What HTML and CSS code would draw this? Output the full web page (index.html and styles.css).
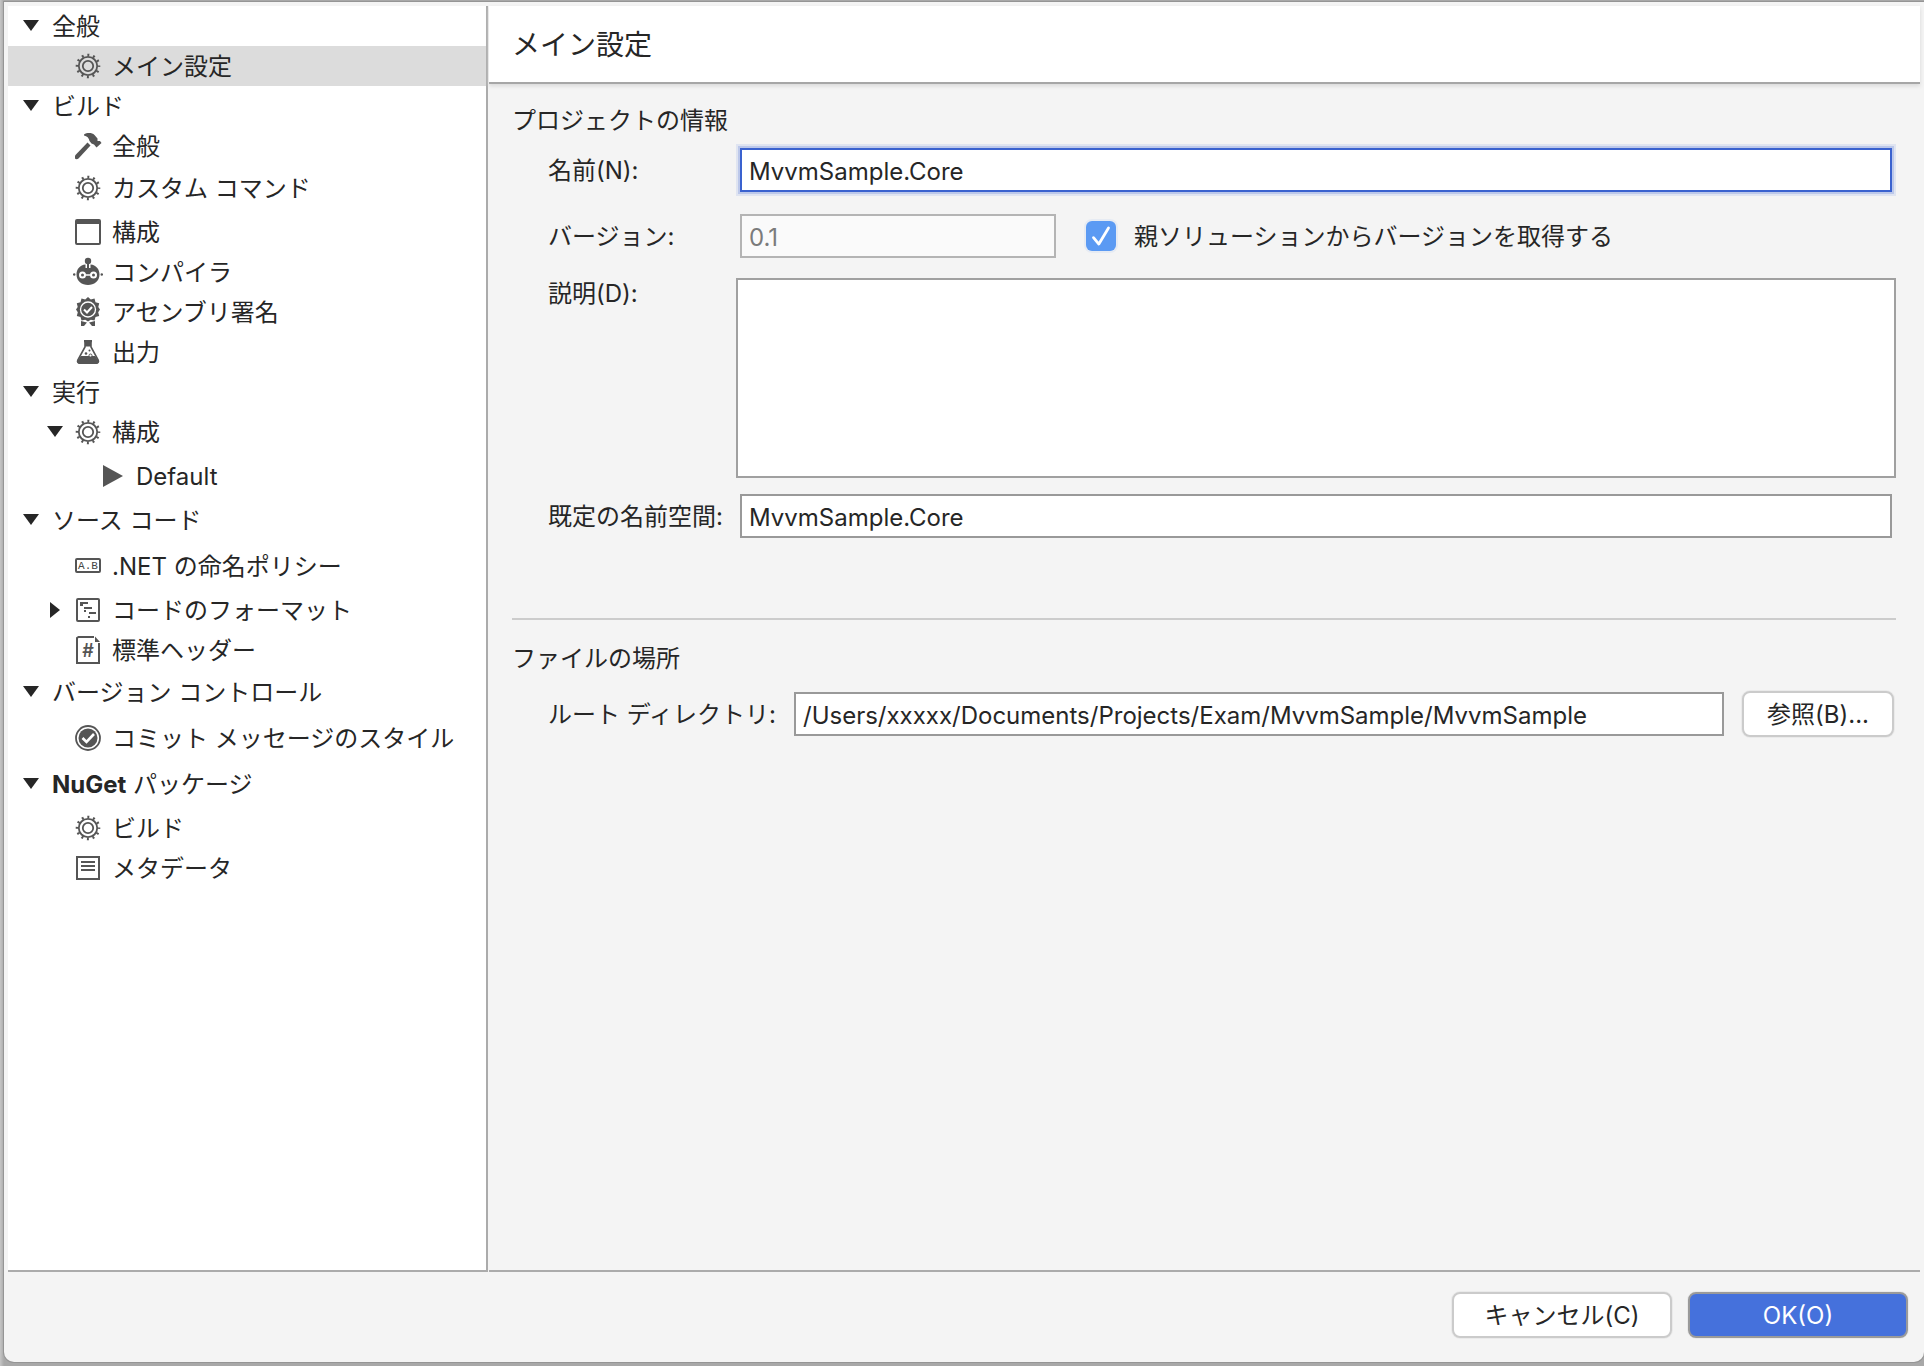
FILE: index.html
```html
<!DOCTYPE html>
<html lang="ja">
<head>
<meta charset="utf-8">
<title>メイン設定</title>
<link rel="stylesheet" href="styles.css">
</head>
<body>
<svg class="defs" width="0" height="0" aria-hidden="true">
  <defs>
    <symbol id="down" viewBox="0 0 16 12"><path d="M0 0h16L8 11z" fill="#262626"/></symbol>
    <symbol id="right" viewBox="0 0 12 16"><path d="M1 0v16l10-8z" fill="#262626"/></symbol>
    <symbol id="gear" viewBox="0 0 30 30">
      <circle cx="15" cy="15" r="11" fill="none" stroke="#555" stroke-width="2.6" stroke-dasharray="2 3.76" stroke-dashoffset="1"/>
      <circle cx="15" cy="15" r="9.2" fill="none" stroke="#555" stroke-width="1.8"/>
      <circle cx="15" cy="15" r="5.2" fill="none" stroke="#555" stroke-width="1.8"/>
    </symbol>
    <symbol id="hammer" viewBox="0 0 30 30">
      <path d="M11 3.500C14 1.500 19 1.500 21.500 4L24.500 7.500V10h2.500L28.500 12L23.500 16.500L21 13.500L18.500 12.500L16.500 10C16 7 14 5 11 4.500z" fill="#555"/>
      <path d="M14.500 11.500L17.500 14.500L5.500 27.500C4.500 28.500 2.500 28.500 2 27.500V24.500z" fill="#555"/>
    </symbol>
    <symbol id="window" viewBox="0 0 30 30"><path fill-rule="evenodd" d="M4 2h22a2 2 0 0 1 2 2v22a2 2 0 0 1-2 2H4a2 2 0 0 1-2-2V4a2 2 0 0 1 2-2zM4 7v19h22V7z" fill="#555"/></symbol>
    <symbol id="robot" viewBox="0 0 30 30">
      <circle cx="15" cy="4" r="3.200" fill="#555"/><path d="M15 5v6" stroke="#555" stroke-width="2"/>
      <path d="M12.500 7.500C7 8 3.500 12 3.500 17.500C3.500 24 9 28 15 28S26.500 24 26.500 17.500C26.500 12 23 8 17.500 7.500V11H16V8H14V11H12.500z" fill="#555"/>
      <circle cx="9.500" cy="18" r="2.500" fill="#555" stroke="#fff" stroke-width="2"/><circle cx="20.500" cy="18" r="2.500" fill="#555" stroke="#fff" stroke-width="2"/>
      <path d="M12.500 18h5" stroke="#fff" stroke-width="1.500"/><circle cx="1.200" cy="17.500" r="1.300" fill="#555"/><circle cx="28.800" cy="17.500" r="1.300" fill="#555"/>
    </symbol>
    <symbol id="badge" viewBox="0 0 30 30">
      <path d="M15 0l2.800 2.500L21.500 1.600l1 3.600 3.700 1.100-.9 3.700L27 12.500l-1.800 2.700 1 3.800-3.700 1-1 3.500-3.700-.8L15 24.500l-2.800-1.800-3.700.8-1-3.500-3.700-1 1-3.800L3 12.500 4.700 10l-.9-3.700 3.700-1.100 1-3.600 3.700.9z" fill="#555"/>
      <circle cx="15" cy="12.500" r="7.500" fill="none" stroke="#fff" stroke-width="1.300"/>
      <path d="M11 12.500l3 3 5-5.500" fill="none" stroke="#fff" stroke-width="2"/>
      <path d="M8 24l6 1.500-3 3.500H8zM22 24l-6 1.500 3 3.500h3z" fill="#555"/>
    </symbol>
    <symbol id="flask" viewBox="0 0 30 30">
      <path d="M12 4v6L4.800 23c-.8 2 .2 3.200 2 3.200h16.400c1.800 0 2.800-1.200 2-3.200L18 10V4" fill="#fff" stroke="#555" stroke-width="1.600"/>
      <path d="M11 3h8v2l-1 .5V9.500h-6V5.500L11 5zM7.800 19h14.400l3 4.500c.6 2-.5 3.300-2 3.300H6.800c-1.500 0-2.600-1.300-2-3.300z" fill="#555"/>
      <circle cx="16.500" cy="13.500" r="1" fill="#555"/><circle cx="13" cy="16.500" r="1.300" fill="#555"/><circle cx="17.500" cy="18.500" r="1.500" fill="#fff" stroke="#555"/>
    </symbol>
    <symbol id="play" viewBox="0 0 30 30"><path d="M6 4v22l20-11z" fill="#555"/></symbol>
    <symbol id="naming" viewBox="0 0 30 30">
      <rect x="3" y="8" width="24" height="13" rx="1" fill="none" stroke="#555" stroke-width="2"/>
      <text x="15" y="18" text-anchor="middle" font-family="Liberation Mono, monospace" font-size="11" fill="#444">A.B</text>
    </symbol>
    <symbol id="format" viewBox="0 0 30 30">
      <rect x="4" y="4" width="22" height="22" rx="1" fill="none" stroke="#555" stroke-width="2"/>
      <path d="M7 8h8M11 13h8M16 18h7M15 22h2M7 10h3M11 16h2" fill="none" stroke="#555" stroke-width="2"/>
    </symbol>
    <symbol id="header" viewBox="0 0 30 30">
      <path d="M21 2H5.500L4 3v25h22V8" fill="none" stroke="#555" stroke-width="2"/><path d="M22 1.500V7h5z" fill="#555"/>
      <text x="15" y="22" text-anchor="middle" font-family="Inter, sans-serif" font-size="18" font-weight="600" fill="#555">#</text>
    </symbol>
    <symbol id="commit" viewBox="0 0 30 30">
      <circle cx="15" cy="15" r="12" fill="none" stroke="#555" stroke-width="1.800"/><circle cx="15" cy="15" r="9.500" fill="#555"/>
      <path d="M9.500 15l4 4 7.500-8" fill="none" stroke="#fff" stroke-width="2.600"/>
    </symbol>
    <symbol id="metadata" viewBox="0 0 30 30"><path d="M4 4h22v22H4zM8 9h14M8 13h14M8 17h14" fill="none" stroke="#555" stroke-width="2"/></symbol>
  </defs>
</svg>

<form class="dialog">
  <nav class="sidebar" aria-label="設定">
    <ul class="tree">
      <li><div class="row"><svg class="arrow"><use href="#down"/></svg>全般</div>
        <ul>
          <li><div class="row child selected"><svg class="icon"><use href="#gear"/></svg>メイン設定</div></li>
        </ul></li>
      <li><div class="row"><svg class="arrow"><use href="#down"/></svg>ビルド</div>
        <ul>
          <li><div class="row child"><svg class="icon"><use href="#hammer"/></svg>全般</div></li>
          <li><div class="row child space-s"><svg class="icon"><use href="#gear"/></svg>カスタム コマンド</div></li>
          <li><div class="row child space-m"><svg class="icon"><use href="#window"/></svg>構成</div></li>
          <li><div class="row child"><svg class="icon"><use href="#robot"/></svg>コンパイラ</div></li>
          <li><div class="row child"><svg class="icon"><use href="#badge"/></svg>アセンブリ署名</div></li>
          <li><div class="row child"><svg class="icon"><use href="#flask"/></svg>出力</div></li>
        </ul></li>
      <li><div class="row"><svg class="arrow"><use href="#down"/></svg>実行</div>
        <ul>
          <li><div class="row branch"><svg class="arrow"><use href="#down"/></svg><svg class="icon"><use href="#gear"/></svg>構成</div>
            <ul>
              <li><div class="row leaf space-m"><svg class="icon"><use href="#play"/></svg>Default</div></li>
            </ul></li>
        </ul></li>
      <li><div class="row space-m"><svg class="arrow"><use href="#down"/></svg>ソース コード</div>
        <ul>
          <li><div class="row child space-l"><svg class="icon"><use href="#naming"/></svg>.NET の命名ポリシー</div></li>
          <li><div class="row branch space-m"><svg class="arrow"><use href="#right"/></svg><svg class="icon"><use href="#format"/></svg>コードのフォーマット</div></li>
          <li><div class="row child"><svg class="icon"><use href="#header"/></svg>標準ヘッダー</div></li>
        </ul></li>
      <li><div class="row space-s"><svg class="arrow"><use href="#down"/></svg>バージョン コントロール</div>
        <ul>
          <li><div class="row child space-l"><svg class="icon"><use href="#commit"/></svg>コミット メッセージのスタイル</div></li>
        </ul></li>
      <li><div class="row space-l"><svg class="arrow"><use href="#down"/></svg><span><b>NuGet</b> パッケージ</span></div>
        <ul>
          <li><div class="row child space-m"><svg class="icon"><use href="#gear"/></svg>ビルド</div></li>
          <li><div class="row child"><svg class="icon"><use href="#metadata"/></svg>メタデータ</div></li>
        </ul></li>
    </ul>
  </nav>

  <main class="main">
    <header class="header"><h1>メイン設定</h1></header>
    <div class="content">
      <section>
        <h2>プロジェクトの情報</h2>
        <div class="fields">
          <div class="field name">
            <label for="name">名前(N):</label>
            <input class="text focused" id="name" type="text" value="MvvmSample.Core">
          </div>
          <div class="field version">
            <label for="version">バージョン:</label>
            <input class="text short" id="version" type="text" value="0.1" disabled>
            <span class="check">
              <input id="inherit" type="checkbox" checked>
              <svg viewBox="0 0 28 28" aria-hidden="true"><path d="M7 15.500l5 6L21 6.500" fill="none" stroke="#fff" stroke-width="2.600" stroke-linecap="round" stroke-linejoin="round"/></svg>
            </span>
            <label for="inherit">親ソリューションからバージョンを取得する</label>
          </div>
          <div class="field description">
            <label for="description">説明(D):</label>
            <textarea id="description"></textarea>
          </div>
          <div class="field">
            <label for="namespace">既定の名前空間:</label>
            <input class="text" id="namespace" type="text" value="MvvmSample.Core">
          </div>
        </div>
      </section>
      <hr>
      <section>
        <h2>ファイルの場所</h2>
        <div class="fields">
          <div class="field root">
            <label for="root">ルート ディレクトリ:</label>
            <input class="text" id="root" type="text" value="/Users/xxxxx/Documents/Projects/Exam/MvvmSample/MvvmSample">
            <button class="button" type="button">参照(B)...</button>
          </div>
        </div>
      </section>
    </div>
  </main>

  <footer class="footer">
    <button class="button action" type="button">キャンセル(C)</button>
    <button class="button action primary" type="submit">OK(O)</button>
  </footer>
</form>
</body>
</html>
```
FILE: styles.css
```css
* {
  box-sizing: border-box;
}

body {
  margin: 0;
  min-height: 100vh;
  display: flex;
  padding: 2px 0 4px 4px;
  background: linear-gradient(to right, #c6c6c6, #a8a8a8 4px, #a8a8a8);
  color: #262626;
  font: 24px/32px Inter, "Noto Sans CJK JP", sans-serif;
}

.defs {
  position: absolute;
}

ul {
  list-style: none;
  margin: 0;
  padding: 0;
}

.dialog {
  flex: 1;
  display: grid;
  grid-template: 1fr 90px / 480px 1fr;
  column-gap: 1px;
  padding: 4px 4px 0;
  background: #f4f4f4;
  border-radius: 0 0 10px 10px;
  box-shadow: 0 0 0 1px #959595;
}

/* Category tree */
.sidebar {
  background: #fff;
  border-right: 2px solid #ababab;
  border-bottom: 2px solid #ababab;
}

.row {
  display: flex;
  align-items: center;
  height: 40px;
  padding: 2px 0 0 15px;
  white-space: nowrap;
}

.row.child {
  padding-left: 65px;
}

.row.branch {
  padding-left: 39px;
}

.row.leaf {
  padding-left: 89px;
}

.space-s {
  margin-top: 2px;
}

.space-m {
  margin-top: 4px;
}

.space-l {
  margin-top: 6px;
}

.selected {
  background: #dcdcdc;
}

.arrow {
  width: 16px;
  height: 16px;
  margin: 0 13px 2px 0;
}

.branch .arrow {
  margin-right: 10px;
}

.icon {
  width: 30px;
  height: 30px;
  margin: 0 9px 2px 0;
}

/* Settings page */
.main {
  display: flex;
  flex-direction: column;
  border-bottom: 2px solid #ababab;
}

.header {
  padding: 19px 23px 17px;
  background: #fff;
  border-bottom: 2px solid #a6a6a6;
  box-shadow: 0 2px 4px #d8d8d8;
}

h1,
h2 {
  margin: 0;
  font-weight: 400;
}

h1 {
  font-size: 28px;
  line-height: 40px;
}

h2 {
  font-size: 24px;
  line-height: 32px;
}

.content {
  padding: 21px 24px 21px 23px;
}

.fields {
  padding: 11px 0 0 36px;
}

.field {
  display: flex;
  align-items: center;
}

.field > label {
  padding-top: 2px;
}

.field > label:first-child {
  width: 188px;
}

.name {
  margin-bottom: 22px;
}

.version {
  margin-bottom: 20px;
}

.description {
  align-items: flex-start;
  margin-bottom: 16px;
}

.description > label {
  padding-top: 0;
}

.root {
  margin-top: 5px;
}

.root > label:first-child {
  width: 242px;
}

.text {
  flex: 1;
  min-width: 0;
  height: 44px;
  margin: 0 4px;
  padding: 2px 7px 0;
  border: 2px solid #999;
  border-radius: 0;
  background: #fff;
  color: inherit;
  font: inherit;
  outline: none;
}

.focused {
  border-color: #3a62cf;
  box-shadow: 0 0 0 2px #bcc8ea, 0 0 0 4px #dfe4f1;
}

.short {
  flex: 0 0 316px;
}

.text:disabled {
  border-color: #b4b4b4;
  background: #fafafa;
  color: #7b7b7b;
}

textarea {
  flex: 1;
  height: 200px;
  border: 2px solid #a0a0a0;
  background: #fff;
  font: inherit;
  resize: none;
}

.check {
  display: grid;
  margin: 0 18px 0 26px;
}

.check > * {
  grid-area: 1 / 1;
  width: 30px;
  height: 30px;
  margin: 0;
}

.check input {
  appearance: none;
  border-radius: 6px;
  background: #5b9af3;
  box-shadow: 0 0 0 2px #e6ebf3;
}

.check svg {
  pointer-events: none;
}

hr {
  height: 2px;
  margin: 80px 0 23px;
  border: 0;
  background: #ccc;
}

.button {
  height: 46px;
  padding: 2px 8px 0;
  border: 2px solid #cbcbcb;
  border-radius: 8px;
  background: #fff;
  box-shadow: 0 0 0 1px #eaeaea;
  color: inherit;
  font: inherit;
  white-space: nowrap;
}

.root .button {
  width: 152px;
  margin: 0 2px 0 14px;
}

/* Dialog actions */
.footer {
  grid-column: 1 / -1;
  display: flex;
  justify-content: flex-end;
  align-items: flex-start;
  gap: 16px;
  padding: 20px 12px;
}

.action {
  width: 220px;
}

.primary {
  border-color: #9a9a9a;
  background: #4571dc;
  color: #fff;
}
```
